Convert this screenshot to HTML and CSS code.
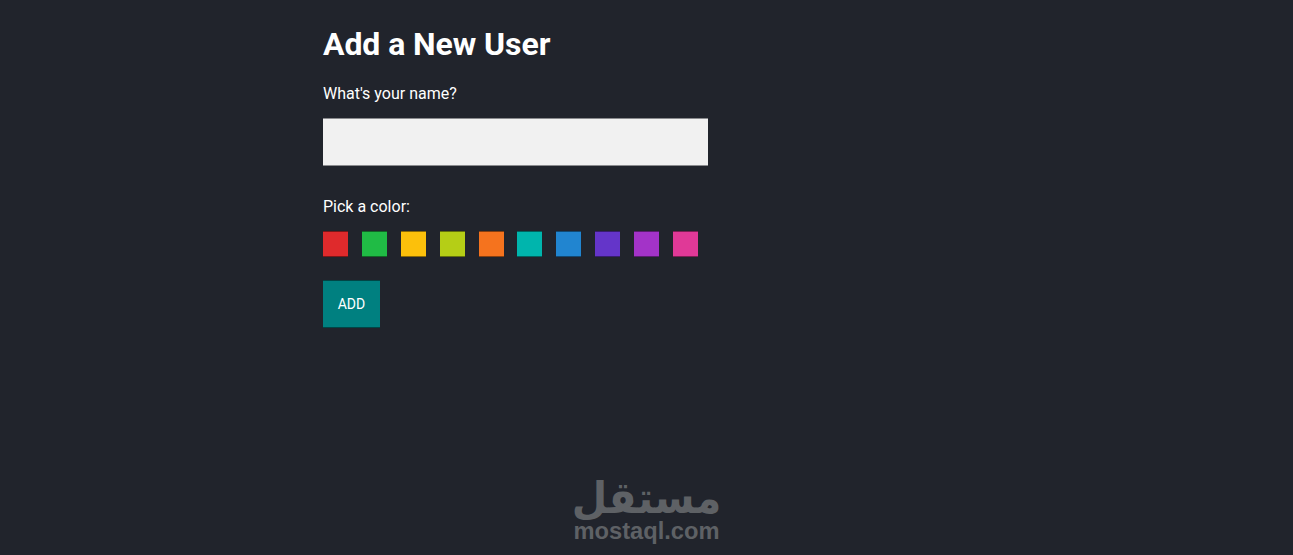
FILE: index.html
```html
<!DOCTYPE html>
<html lang="en">
<head>
    <meta charset="UTF-8">
    <meta name="viewport" content="width=device-width, initial-scale=1.0">
    <title>Add a New User</title>
    <link rel="stylesheet" href="styles.css">
</head>
<body>
    <div class="main-container">
        <h1 class="page-title">Add a New User</h1>
        <label class="input-label" for="userName">What's your name?</label>
        <input id="userName" class="name-input" autocomplete="off">
        <div class="color-label">Pick a color:</div>
        <div class="color-list">
            <span class="color-item red"></span>
            <span class="color-item green"></span>
            <span class="color-item yellow"></span>
            <span class="color-item lime"></span>
            <span class="color-item orange"></span>
            <span class="color-item teal"></span>
            <span class="color-item blue"></span>
            <span class="color-item indigo"></span>
            <span class="color-item purple"></span>
            <span class="color-item pink"></span>
        </div>
        <button class="add-btn">ADD</button>
    </div>
    <div class="watermark">
        <div class="watermark-ar" lang="ar" dir="rtl">مستقل</div>
        <div class="watermark-en">mostaql.com</div>
    </div>
</body>
</html>
```

FILE: styles.css
```css
html,
body {
    height: 100%;
}

body {
    margin: 0;
    position: relative;
    overflow: hidden;
    background: #21242c;
    color: #fff;
    font-family: Roboto, "Liberation Sans", sans-serif;
    font-size: 16px;
}

.main-container {
    display: flex;
    flex-direction: column;
    align-items: flex-start;
    padding-left: 323px;
}

.page-title {
    margin: 25px 0 0;
    font-size: 32px;
    font-weight: 700;
    letter-spacing: -0.08px;
    line-height: 38px;
}

.input-label {
    margin-top: 21px;
    line-height: 19px;
}

.name-input {
    box-sizing: border-box;
    width: 385px;
    height: 48px;
    margin-top: 15px;
    border: 0;
    border-top: 1px solid #8a8b8e;
    border-bottom: 1px solid #8a8b8e;
    background: #f1f1f1;
}

.color-label {
    margin-top: 31px;
    line-height: 19px;
}

.color-list {
    display: flex;
    gap: 13.88px;
    margin-top: 15px;
}

.color-item {
    width: 25px;
    height: 26px;
    box-shadow: inset 0 1px rgba(0, 0, 0, 0.45), inset 0 -1px rgba(0, 0, 0, 0.45);
}

.red { background: #df2a2c; }
.green { background: #20bb45; }
.yellow { background: #fcc00b; }
.lime { background: #b5ce16; }
.orange { background: #f5731e; }
.teal { background: #00b5ad; }
.blue { background: #2185d0; }
.indigo { background: #6435c9; }
.purple { background: #a333c8; }
.pink { background: #e03997; }

.add-btn {
    width: 57px;
    height: 48px;
    margin-top: 23px;
    border: 0;
    background: #008080;
    box-shadow: inset 0 1px rgba(0, 0, 0, 0.45), inset 0 -1px rgba(0, 0, 0, 0.45);
    color: #fff;
    font-family: inherit;
    font-size: 14px;
}

/* site stamp over the bottom of the shot */
.watermark {
    position: absolute;
    left: 573px;
    top: 474px;
    width: 147px;
    color: #5e6165;
}

.watermark-ar {
    display: flex;
    justify-content: center;
    font-family: "DejaVu Sans", sans-serif;
    font-size: 44px;
    font-weight: 700;
    line-height: 47px;
    transform: scaleX(0.93);
}

.watermark-en {
    font-family: "Liberation Sans", sans-serif;
    font-size: 23.7px;
    font-weight: 700;
    line-height: 20px;
    text-align: center;
}
```
